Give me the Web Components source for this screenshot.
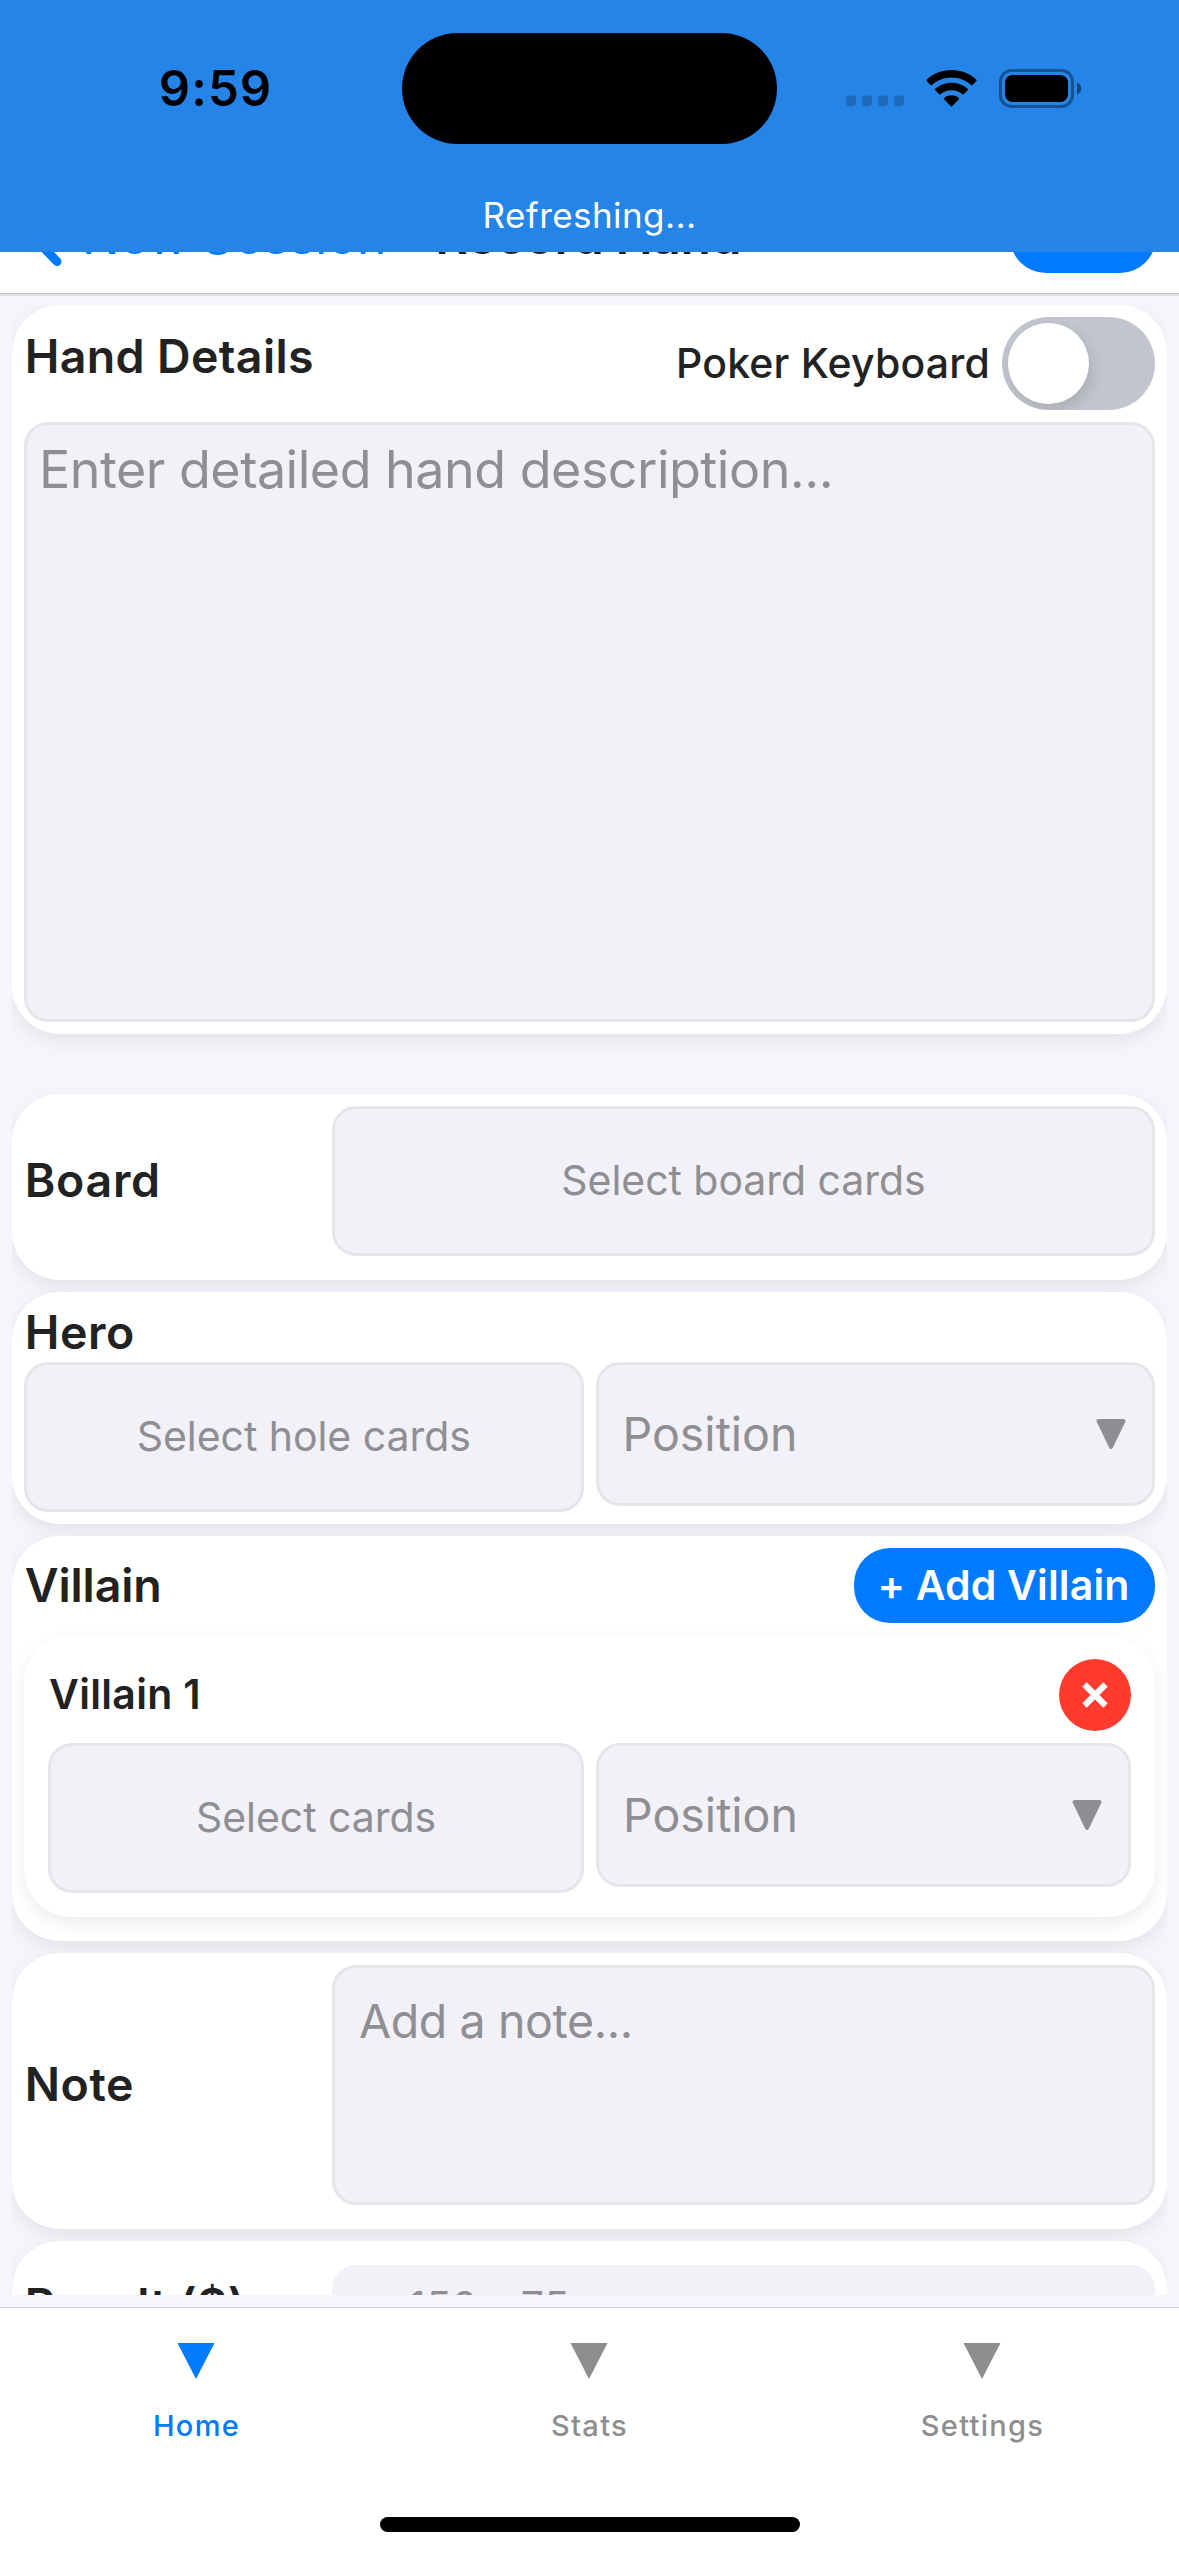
<!DOCTYPE html>
<html lang="en">
<head>
<meta charset="utf-8">
<title>Record Hand</title>
<style>
  html, body { margin: 0; padding: 0; }
  body { width: 1179px; height: 2556px; overflow: hidden; background: #f4f6fb; font-family: Inter, "Liberation Sans", sans-serif; color: #222; }
</style>
</head>
<body>
<hand-app></hand-app>

<script>
const define = (name, html) => {
  const tpl = document.createElement('template');
  tpl.innerHTML = html;
  customElements.define(name, class extends HTMLElement {
    constructor() {
      super();
      this.attachShadow({ mode: 'open' }).append(tpl.content.cloneNode(true));
    }
  });
};

/* Status bar with the refresh banner */
define('refresh-banner', `
<style>
  :host { display: flex; flex-direction: column; box-sizing: border-box; width: 1179px; height: 252px; padding-top: 33px; background: #2484e8; }
  .status { display: flex; height: 111px; align-items: center; color: #000; }
  .time { width: 402px; box-sizing: border-box; padding-left: 29px; text-align: center; font-size: 49px; font-weight: 600; letter-spacing: 1.1px; line-height: 60px; }
  .island { width: 375px; height: 111px; border-radius: 56px; background: #000; }
  .icons { display: flex; align-items: center; margin-left: 69px; height: 39px; }
  .icons svg { display: block; }
  .dots { align-self: flex-end; margin-bottom: 2px; }
  .wifi { margin-left: 22px; }
  .battery { margin-left: 22px; }
  .msg { height: 71px; padding-top: 35px; text-align: center; font-size: 35px; line-height: 72px; letter-spacing: .42px; color: #fff; }
</style>
<div class="status">
  <div class="time">9:59</div>
  <div class="island"></div>
  <div class="icons">
    <svg class="dots" width="58" height="11" viewBox="0 0 58 11" fill="#000" fill-opacity=".2">
      <rect x="0" y=".5" width="10" height="10.5" rx="3.6"/><rect x="16" y=".5" width="10" height="10.5" rx="3.6"/><rect x="32" y=".5" width="10" height="10.5" rx="3.6"/><rect x="48" y=".5" width="10" height="10.5" rx="3.6"/>
    </svg>
    <svg class="wifi" width="51" height="37" viewBox="0 0 51 37">
      <path d="M25.5 0C35.2 0 43.900 3.600 50.400 9.700Q51 10.400 50.400 11L46.400 15Q45.700 15.600 45 15C39.800 10.300 33 7.600 25.500 7.600S11.200 10.300 6 15Q5.300 15.600 4.600 15L.6 11Q0 10.400 .6 9.700C7.100 3.600 15.800 0 25.500 0Z"/>
      <path d="M25.500 12.700C31.900 12.700 37.500 15 41.700 18.800Q42.400 19.500 41.700 20.200L37.600 24.300Q37 24.800 36.300 24.300C33.400 21.800 29.700 20.300 25.500 20.300S17.600 21.800 14.700 24.300Q14 24.800 13.400 24.300L9.300 20.200Q8.600 19.500 9.300 18.800C13.500 15 19.100 12.700 25.500 12.700Z"/>
      <path d="M25.500 25.300C28.400 25.300 31 26.300 32.900 27.900Q33.600 28.600 32.900 29.300L26.200 36.200Q25.500 36.900 24.800 36.200L18.100 29.300Q17.400 28.600 18.100 27.900C20 26.300 22.600 25.300 25.500 25.300Z"/>
    </svg>
    <svg class="battery" width="83" height="39" viewBox="0 0 83 39">
      <rect x="1.500" y="1.500" width="72" height="36" rx="11" fill="none" stroke="#000" stroke-opacity=".38" stroke-width="3"/>
      <rect x="6" y="6" width="63" height="27" rx="7.500"/>
      <path d="M78 13.500c2.700 1 4.200 3.300 4.200 6s-1.500 5-4.200 6z" fill-opacity=".45"/>
    </svg>
  </div>
</div>
<div class="msg">Refreshing...</div>`);

/* Navigation header, partly beneath the banner */
define('nav-header', `
<style>
  :host { display: flex; align-items: center; box-sizing: border-box; width: 1179px; height: 296px; padding: 178px 23px 0 26px; background: #fff; border-bottom: 2px solid #e0e1e6; box-shadow: inset 0 -1px 0 #c0c1c6; font-size: 50px; line-height: 60px; white-space: nowrap; }
  svg { display: block; flex: none; }
  .back { margin-left: 20px; letter-spacing: -.2px; color: #007aff; }
  .title { margin-left: 49px; font-weight: 600; letter-spacing: -.5px; color: #1c1c1e; }
  .save { margin: -2px 0 0 auto; width: 146px; height: 75px; border-radius: 36px; background: #007aff; }
</style>
<svg width="36" height="60" viewBox="0 0 36 60" fill="none" stroke="#007aff" stroke-width="9" stroke-linecap="round" stroke-linejoin="round"><path d="M31 4.500 6.500 30 31 55.500"/></svg>
<div class="back">New Session</div>
<div class="title">Record Hand</div>
<div class="save"></div>`);

define('form-card', `
<style>
  :host { display: flex; flex-direction: column; box-sizing: border-box; width: 1155px; flex: none; padding: 12px; border-radius: 48px; background: #fff; box-shadow: 0 6px 18px rgba(0,0,0,.08); }
  :host([row]) { flex-direction: row; align-items: center; padding-bottom: 24px; }
  :host([row]) ::slotted(card-title) { width: 308px; }
</style>
<slot></slot>`);

define('card-title', `
<style>
  :host { display: block; box-sizing: border-box; flex: none; height: 58px; padding-left: .7px; font-size: 46.500px; font-weight: 600; line-height: 57px; letter-spacing: var(--track, .4px); color: #222; white-space: nowrap; }
</style>
<slot></slot>`);

/* Grey input surface */
define('field-box', `
<style>
  :host { display: flex; align-items: center; justify-content: center; box-sizing: border-box; height: 150px; min-width: 0; flex: 1 1 0; padding-bottom: 2px; border: 3px solid #e5e5ea; border-radius: 24px; background: #f2f1f7; color: #8e8e93; font-size: 41px; line-height: 58px; letter-spacing: -.05px; white-space: nowrap; }
  :host([multiline]) { align-items: flex-start; justify-content: flex-start; padding: 24px; font-size: 46.500px; letter-spacing: -.38px; }
</style>
<slot></slot>`);

define('position-select', `
<style>
  :host { display: flex; align-items: center; justify-content: space-between; box-sizing: border-box; height: 144px; min-width: 0; padding: 0 25px 0 24px; border: 3px solid #e5e5ea; border-radius: 24px; background: #f2f1f7; color: #8e8e93; font-size: 46.500px; line-height: 58px; }
  svg { display: block; }
</style>
<slot></slot>
<svg width="32" height="32" viewBox="0 0 32 32"><path d="M3.500 3H28.500L16 29Z" fill="#8e8e93" stroke="#8e8e93" stroke-width="4" stroke-linejoin="round"/></svg>`);

define('field-row', `
<style>:host { display: grid; grid-template-columns: minmax(0, 1fr) minmax(0, 1fr); align-items: start; gap: 12px; }
:host([inner]) { grid-template-columns: 536px minmax(0, 1fr); }</style><slot></slot>`);

define('toggle-switch', `
<style>
  :host { display: flex; align-items: center; box-sizing: border-box; width: 153px; height: 93px; padding: 6px; border-radius: 47px; background: #c2c5cd; overflow: hidden; }
  .knob { width: 81px; height: 81px; border-radius: 50%; background: #fff; box-shadow: 3px 6px 14px rgba(0,0,0,.12); }
</style>
<div class="knob"></div>`);

define('details-head', `
<style>
  :host { display: flex; align-items: center; height: 93px; margin-bottom: 12px; }
  card-title { align-self: flex-start; margin-top: 11px; --track: .36px; }
  .label { margin: -1px 12px 0 auto; font-size: 41px; font-weight: 500; line-height: 50px; letter-spacing: .18px; color: #222; }
</style>
<card-title>Hand Details</card-title><div class="label">Poker Keyboard</div><toggle-switch></toggle-switch>`);

define('add-button', `
<style>
  :host { display: flex; align-items: center; justify-content: center; box-sizing: border-box; width: 301px; height: 75px; padding: 0 2px 2px 0; border-radius: 36px; background: #007aff; color: #fff; font-size: 41px; font-weight: 600; letter-spacing: .17px; white-space: nowrap; }
</style>
<slot></slot>`);

define('remove-button', `
<style>
  :host { display: flex; align-items: center; justify-content: center; box-sizing: border-box; width: 72px; height: 72px; padding-bottom: 1px; border-radius: 50%; background: #ff3b30; }
  svg { display: block; }
</style>
<svg width="26" height="26" viewBox="0 0 26 26" fill="none" stroke="#fff" stroke-width="6.200"><path d="M2.500 2.500 23.500 23.500M23.500 2.500 2.500 23.500"/></svg>`);

define('villain-head', `
<style>:host { display: flex; align-items: center; justify-content: space-between; margin-bottom: 12px; }</style><slot></slot>`);

define('villain-card', `
<style>
  :host { display: flex; flex-direction: column; box-sizing: border-box; margin-bottom: 12px; padding: 24px; border-radius: 48px; background: #fff; box-shadow: 0 6px 18px rgba(0,0,0,.08); }
  .head { display: flex; align-items: center; justify-content: space-between; height: 72px; margin-bottom: 12px; }
  .name { font-size: 41px; font-weight: 600; letter-spacing: .32px; line-height: 50px; margin: -2px 0 0 1px; }
</style>
<div class="head"><div class="name"><slot name="name"></slot></div><remove-button></remove-button></div>
<slot></slot>`);

define('tab-item', `
<style>
  :host { display: flex; flex-direction: column; align-items: center; flex: 1 1 0; padding-top: 35px; color: #8e8e8f; }
  :host([active]) { color: #007aff; }
  svg { display: block; margin-right: 1px; }
  .label { margin-top: 28px; font-size: 29px; font-weight: 500; line-height: 38px; letter-spacing: 1.300px; }
</style>
<svg width="38" height="36" viewBox="0 0 38 36"><path d="M.5 0H37.500L19 36Z" fill="currentColor"/></svg>
<div class="label"><slot></slot></div>`);

define('tab-bar', `
<style>
  :host { display: flex; flex-direction: column; box-sizing: border-box; height: 249px; border-top: 1px solid #d3d3d8; background: #fff; }
  .tabs { display: flex; height: 209px; }
  .home { width: 420px; height: 15px; margin: 0 auto; border-radius: 8px; background: #000; }
</style>
<div class="tabs"><slot></slot></div>
<div class="home"></div>`);

define('hand-app', `
<style>
  :host { display: flex; flex-direction: column; position: relative; width: 1179px; height: 2556px; overflow: hidden; background: #f4f6fb; }
  refresh-banner { position: absolute; top: 0; left: 0; z-index: 2; }
  nav-header { flex: none; }
  main { display: flex; flex-direction: column; gap: 12px; box-sizing: border-box; width: 1155px; height: 1990px; margin: 9px 12px 12px; overflow: hidden; }
  tab-bar { flex: none; }
  .details { margin-bottom: 48px; }
  .hand { flex: none; height: 600px; padding: 12px; font-size: 52px; line-height: 65px; letter-spacing: -.5px; }
  .note { height: 240px; }
  .result { justify-content: flex-start; height: 81px; border-color: #f2f1f7; padding-left: 46px; padding-bottom: 0; letter-spacing: .7px; }
  .last { padding-top: 24px; }
</style>
<refresh-banner></refresh-banner>
<nav-header></nav-header>
<main>
  <form-card class="details">
    <details-head></details-head>
    <field-box class="hand" multiline>Enter detailed hand description...</field-box>
  </form-card>
  <form-card row>
    <card-title style="--track:.7px">Board</card-title>
    <field-box>Select board cards</field-box>
  </form-card>
  <form-card>
    <card-title style="--track:.6px">Hero</card-title>
    <field-row><field-box>Select hole cards</field-box><position-select>Position</position-select></field-row>
  </form-card>
  <form-card>
    <villain-head><card-title style="--track:-.1px">Villain</card-title><add-button>+ Add Villain</add-button></villain-head>
    <villain-card>
      <span slot="name">Villain 1</span>
      <field-row inner><field-box>Select cards</field-box><position-select>Position</position-select></field-row>
    </villain-card>
  </form-card>
  <form-card row>
    <card-title style="--track:.6px">Note</card-title>
    <field-box class="note" multiline>Add a note...</field-box>
  </form-card>
  <form-card row class="last">
    <card-title style="--track:.35px">Result ($)</card-title>
    <field-box class="result">+150, -75</field-box>
  </form-card>
</main>
<tab-bar>
  <tab-item active>Home</tab-item>
  <tab-item>Stats</tab-item>
  <tab-item>Settings</tab-item>
</tab-bar>`);
</script>
</body>
</html>
